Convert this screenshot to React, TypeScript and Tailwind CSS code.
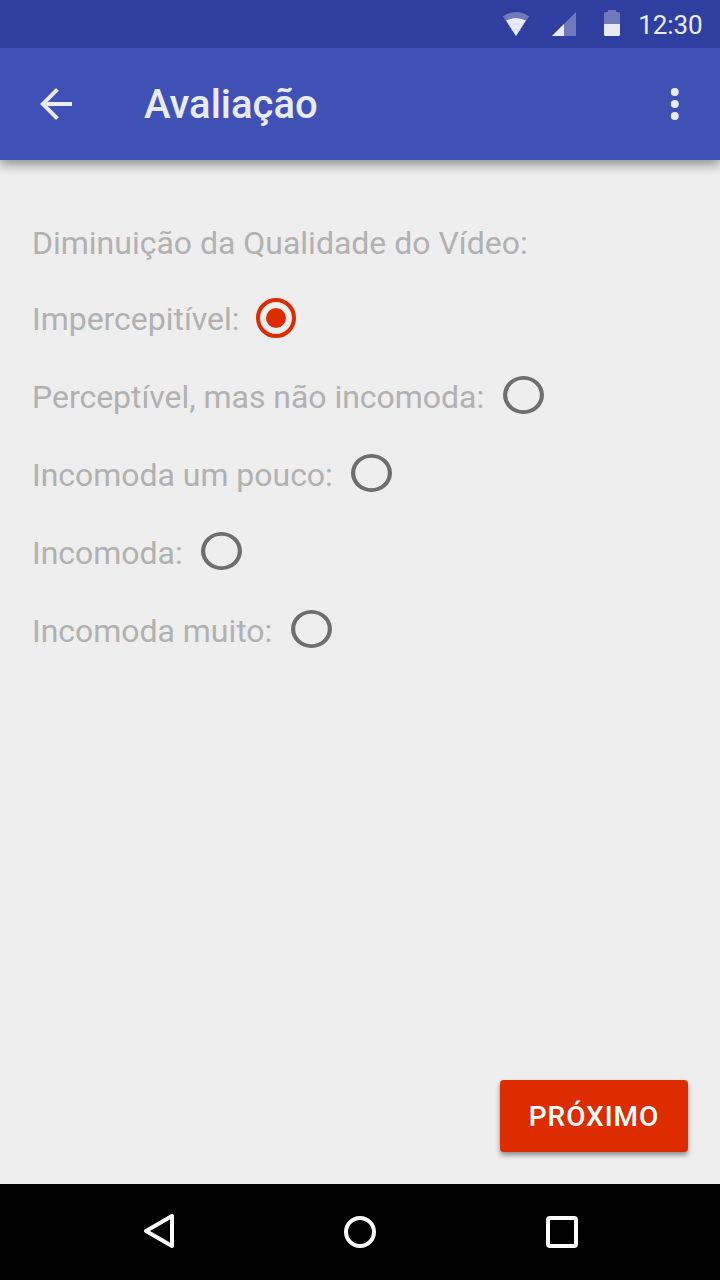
import { useState } from "react";

const options = [
  { label: "Impercepitível:", gap: "ml-[17px]" },
  { label: "Perceptível, mas não incomoda:", gap: "ml-[19px]" },
  { label: "Incomoda um pouco:", gap: "ml-[18.4px]" },
  { label: "Incomoda:", gap: "ml-[18.5px]" },
  { label: "Incomoda muito:", gap: "ml-[19px]" },
];

function StatusBar() {
  return (
    <div className="z-20 flex h-12 shrink-0 items-center justify-end bg-[#303f9f] pr-[17.5px] text-[#e8eaf6]">
      <svg className="mr-[22px] h-12 w-7" viewBox="502 0 28 48">
        <path d="M502.8 16.2Q516 7.6 529.2 16.2L516 36Z" fill="#7179bc" />
        <path d="M506.2 20.6Q516 15.2 525.8 20.6L516 36Z" fill="#e8eaf6" />
        <path d="M508.5 24.8Q516 23 523.5 24.8M511.5 30.6Q516 29.2 520.5 30.6" fill="none" stroke="#d3d6ec" strokeWidth="0.6" />
      </svg>
      <svg className="mr-7 h-12 w-6" viewBox="552 0 24 48">
        <path d="M552 36L576 12V36Z" fill="#7179bc" />
        <path d="M552 36L564 24V36Z" fill="#e8eaf6" />
      </svg>
      <svg className="mr-[18px] h-12 w-4" viewBox="604 0 16 48">
        <path d="M608 10H616V12H618.5Q620 12 620 13.5V24H604V13.5Q604 12 605.5 12H608Z" fill="#7179bc" />
        <path d="M604 24H620V34.5Q620 36 618.5 36H605.5Q604 36 604 34.5Z" fill="#e8eaf6" />
      </svg>
      <span className="mt-[2px] text-[26px] leading-8 tracking-[-0.1px]">12:30</span>
    </div>
  );
}

function AppBar() {
  return (
    <header className="z-10 flex h-28 shrink-0 items-center bg-[#3f51b5] pl-10 pr-[37px] text-[#e8eaf6] shadow-[0_5px_10px_rgba(0,0,0,0.38)]">
      <button aria-label="Voltar" className="mr-[72px]">
        <svg className="size-8" viewBox="0 0 32 32" fill="none" stroke="currentColor">
          <path d="M32 16H4M17.4 1.4L2.8 16L17.4 30.6" strokeWidth="3.9" />
        </svg>
      </button>
      <h1 className="flex-1 pt-[2px] text-[40px] font-medium leading-none">Avaliação</h1>
      <button aria-label="Mais opções">
        <svg className="h-8 w-4" viewBox="0 0 16 32" fill="currentColor">
          <circle cx="7.8" cy="4" r="4" />
          <circle cx="7.8" cy="16" r="4" />
          <circle cx="7.8" cy="28" r="4" />
        </svg>
      </button>
    </header>
  );
}

function RadioMark({ checked }: { checked: boolean }) {
  return checked ? (
    <svg className="mb-[2px] size-10" viewBox="0 0 40 40">
      <circle cx="20" cy="20" r="18" fill="none" stroke="#dd2c00" strokeWidth="4" />
      <circle cx="20" cy="20" r="10" fill="#dd2c00" />
    </svg>
  ) : (
    <svg className="mb-1 h-[38px] w-[41px]" viewBox="0 0 41 38">
      <path
        fillRule="evenodd"
        fill="#6e6e6e"
        d="M0 19A20.5 19 0 1 1 41 19A20.5 19 0 1 1 0 19ZM4.2 19A16.3 15.2 0 1 0 36.8 19A16.3 15.2 0 1 0 4.2 19Z"
      />
    </svg>
  );
}

export default function App() {
  const [selected, setSelected] = useState(0);
  return (
    <div className="flex h-[1280px] w-[720px] flex-col bg-[#eeeeee] font-['Roboto',sans-serif]">
      <StatusBar />
      <AppBar />
      <main className="flex flex-1 flex-col px-8 pb-8 pt-[45px] text-[32px] leading-none tracking-[-0.03px] text-[#b1b1b1]">
        <h2 className="flex h-[75px] items-center tracking-[-0.01px]">Diminuição da Qualidade do Vídeo:</h2>
        <div role="radiogroup" className="flex flex-col items-start">
          {options.map((option, i) => (
            <button
              key={option.label}
              role="radio"
              aria-checked={selected === i}
              onClick={() => setSelected(i)}
              className="flex h-[78px] items-center"
            >
              <span>{option.label}</span>
              <span className={option.gap}>
                <RadioMark checked={selected === i} />
              </span>
            </button>
          ))}
        </div>
        <button className="mt-auto h-[72px] w-[188px] self-end rounded bg-[#dd2c00] pt-[2px] text-[28px] font-medium tracking-[0.95px] text-white shadow-[0_3px_5px_rgba(0,0,0,0.42)]">
          PRÓXIMO
        </button>
      </main>
      <nav className="flex h-24 shrink-0 items-center bg-black pl-[143px] pr-[142px] text-white">
        <svg className="h-24 w-8" viewBox="143 1184 32 96">
          <path d="M172 1216V1246L146 1231Z" fill="none" stroke="currentColor" strokeWidth="4" strokeLinejoin="round" />
        </svg>
        <svg className="ml-[169px] size-8" viewBox="0 0 32 32">
          <circle cx="16" cy="16" r="14" fill="none" stroke="currentColor" strokeWidth="4" />
        </svg>
        <svg className="ml-auto size-8" viewBox="0 0 32 32">
          <rect x="2" y="2" width="28" height="28" rx="2" fill="none" stroke="currentColor" strokeWidth="4" />
        </svg>
      </nav>
    </div>
  );
}
